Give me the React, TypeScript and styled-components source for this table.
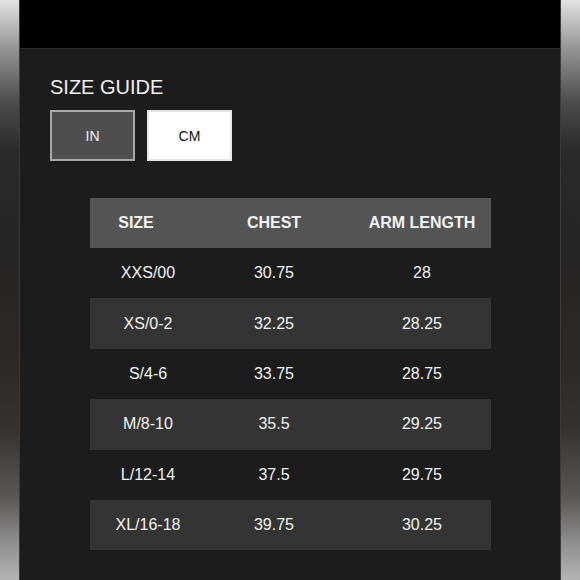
import styled, { createGlobalStyle } from "styled-components";

const SIZE_ROWS = [
  { size: "XXS/00", chest: "30.75", arm: "28" },
  { size: "XS/0-2", chest: "32.25", arm: "28.25" },
  { size: "S/4-6", chest: "33.75", arm: "28.75" },
  { size: "M/8-10", chest: "35.5", arm: "29.25" },
  { size: "L/12-14", chest: "37.5", arm: "29.75" },
  { size: "XL/16-18", chest: "39.75", arm: "30.25" },
];

const GlobalStyle = createGlobalStyle`
  html, body {
    margin: 0;
    padding: 0;
    height: 580px;
    overflow: hidden;
  }
  body {
    font-family: "Liberation Sans", Arial, Helvetica, sans-serif;
    background: linear-gradient(
      to bottom,
      #e2e2e2 0px,
      #9a9a9a 45px,
      #4e4e4e 100px,
      #2a2a2a 150px,
      #262525 250px,
      #2c2826 360px,
      #353230 430px,
      #5c5a59 500px,
      #8c8b8b 540px,
      #b4b4b4 580px
    );
  }
`;

const Page = styled.div`
  display: flex;
  justify-content: center;
  height: 580px;
`;

const Panel = styled.div`
  width: 540px;
  height: 580px;
  background: #1c1c1c;
  box-shadow: -1px 0 0 #3a3a3a, 1px 0 0 #3a3a3a;
  display: flex;
  flex-direction: column;
`;

const TopBar = styled.div`
  height: 48px;
  background: #000;
  border-bottom: 1px solid #2a2a2a;
  flex-shrink: 0;
`;

const Content = styled.div`
  padding: 27px 0 0 30px;
  display: flex;
  flex-direction: column;
`;

const Title = styled.div`
  color: #f0f0f0;
  font-size: 20px;
  line-height: 23px;
`;

const UnitRow = styled.div`
  display: flex;
  gap: 12px;
  margin-top: 11px;
`;

const UnitButton = styled.div<{ $active?: boolean }>`
  box-sizing: border-box;
  width: 85px;
  height: 51px;
  display: flex;
  align-items: center;
  justify-content: center;
  font-size: 14px;
  border: 2px solid ${(p) => (p.$active ? "#e6e6e6" : "#a8a8a8")};
  background: ${(p) => (p.$active ? "#ffffff" : "#4e4e4e")};
  color: ${(p) => (p.$active ? "#111" : "#f0f0f0")};
`;

const Table = styled.div`
  margin: 37px 0 0 70px;
  width: 401px;
`;

const Row = styled.div<{ $shade?: "head" | "dark" | "none" }>`
  display: grid;
  grid-template-columns: 116px 136px 1fr;
  align-items: center;
  height: ${(p) => (p.$shade === "head" ? "50px" : "50.4px")};
  background: ${(p) =>
    p.$shade === "head" ? "#545454" : p.$shade === "dark" ? "#343434" : "transparent"};
  color: #f2f2f2;
  font-size: 16px;
  font-weight: ${(p) => (p.$shade === "head" ? 700 : 400)};
`;

const Cell = styled.div<{ $col: number; $head?: boolean }>`
  text-align: center;
  padding-left: ${(p) => (p.$col === 2 ? "11px" : "0")};
  padding-right: ${(p) => (p.$col === 0 && p.$head ? "24px" : "0")};
  white-space: nowrap;
`;

export default function App() {
  return (
    <>
      <GlobalStyle />
      <Page>
        <Panel>
          <TopBar />
          <Content>
            <Title>SIZE GUIDE</Title>
            <UnitRow>
              <UnitButton>IN</UnitButton>
              <UnitButton $active>CM</UnitButton>
            </UnitRow>
          </Content>
          <Table>
            <Row $shade="head">
              <Cell $col={0} $head>SIZE</Cell>
              <Cell $col={1} $head>CHEST</Cell>
              <Cell $col={2} $head>ARM LENGTH</Cell>
            </Row>
            {SIZE_ROWS.map((row, index) => (
              <Row key={row.size} $shade={index % 2 === 1 ? "dark" : "none"}>
                <Cell $col={0}>{row.size}</Cell>
                <Cell $col={1}>{row.chest}</Cell>
                <Cell $col={2}>{row.arm}</Cell>
              </Row>
            ))}
          </Table>
        </Panel>
      </Page>
    </>
  );
}
